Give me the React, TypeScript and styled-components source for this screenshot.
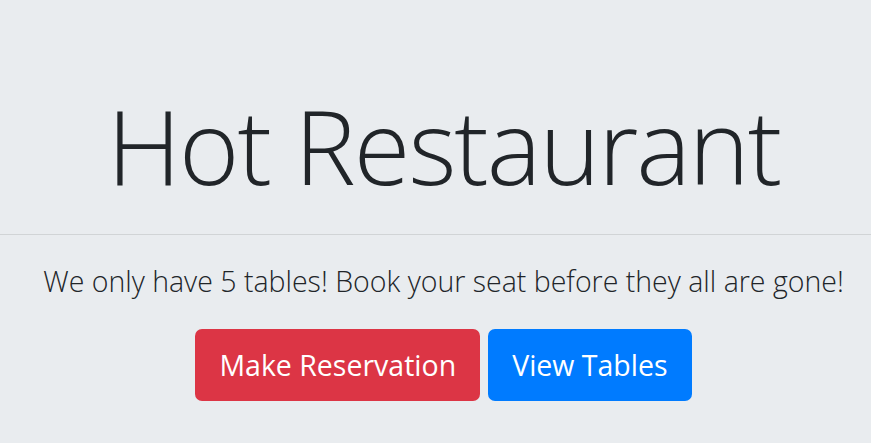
import React from "react";
import styled, { createGlobalStyle } from "styled-components";

const Global = createGlobalStyle`
  html, body { margin: 0; padding: 0; background: #e9ecef; }
  body { font-family: "Open Sans", "Noto Sans", sans-serif; color: #212529; }
`;

const Jumbotron = styled.main`
  display: flex;
  flex-direction: column;
  align-items: center;
  background: #e9ecef;
  min-height: 443px;
  padding: 94px 0 0 16px;
  box-sizing: border-box;
`;

const Title = styled.h1`
  margin: 0;
  font-size: 103px;
  font-weight: 300;
  line-height: 1;
  letter-spacing: -2px;
  color: #212529;
`;

const Rule = styled.hr`
  align-self: stretch;
  margin: 37px 0 0 -16px;
  border: 0;
  border-top: 1.5px solid rgba(0, 0, 0, 0.1);
`;

const Lead = styled.p`
  margin: 24px 0 0;
  font-size: 28.5px;
  font-weight: 300;
  line-height: 45px;
  color: #212529;
`;

const Actions = styled.div`
  display: flex;
  gap: 8px;
  margin-top: 25px;
`;

const Button = styled.a<{ $variant: "danger" | "primary" }>`
  display: inline-flex;
  align-items: center;
  justify-content: center;
  height: 72px;
  padding: 0 24px;
  box-sizing: border-box;
  border-radius: 7px;
  font-size: 28.5px;
  font-weight: 400;
  color: #fff;
  text-decoration: none;
  background: ${(p) => (p.$variant === "danger" ? "#dc3545" : "#007bff")};
`;

export default function App() {
  return (
    <>
      <Global />
      <Jumbotron>
        <Title>Hot Restaurant</Title>
        <Rule />
        <Lead>We only have 5 tables! Book your seat before they all are gone!</Lead>
        <Actions>
          <Button $variant="danger" href="#">Make Reservation</Button>
          <Button $variant="primary" href="#">View Tables</Button>
        </Actions>
      </Jumbotron>
    </>
  );
}
